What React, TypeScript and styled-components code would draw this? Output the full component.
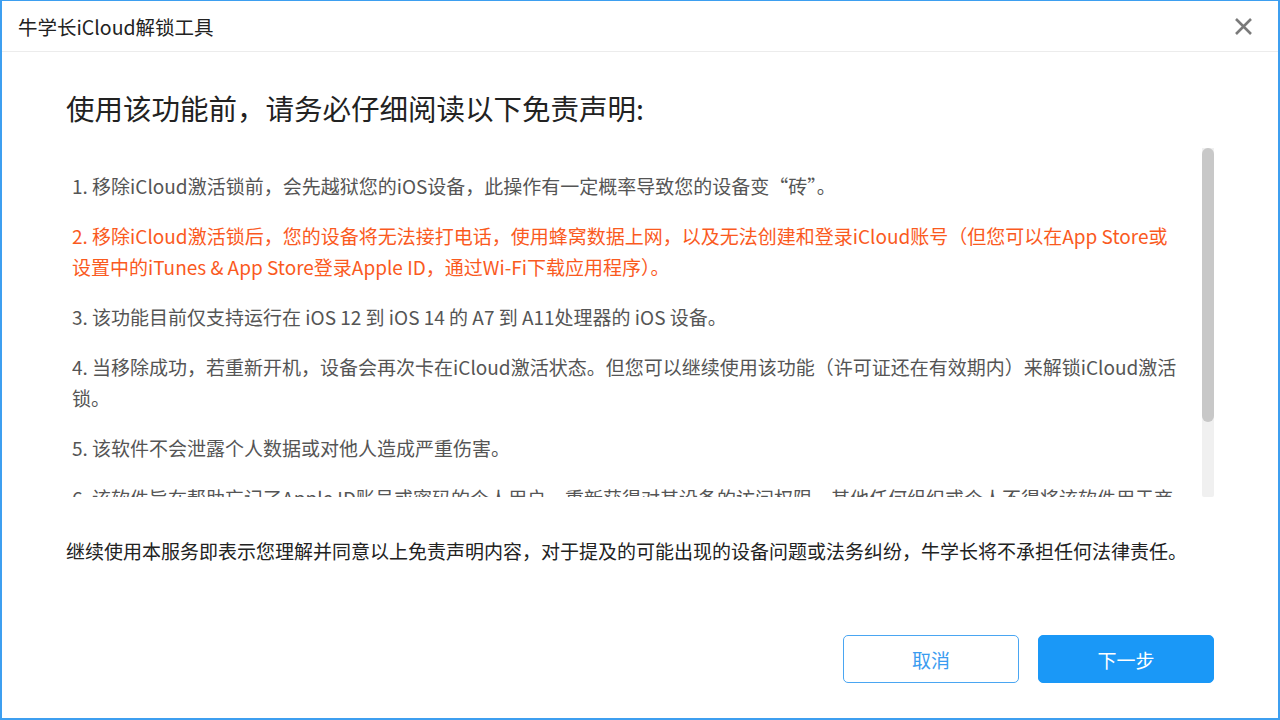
import styled, { createGlobalStyle } from "styled-components";

const GlobalStyle = createGlobalStyle`
  html, body {
    margin: 0;
    padding: 0;
    overflow: hidden;
    background: #ffffff;
  }
  * {
    box-sizing: border-box;
  }
`;

const fontStack = `"Noto Sans CJK SC", "Noto Sans", "Liberation Sans", sans-serif`;

const StyledWindow = styled.div`
  width: 1280px;
  height: 720px;
  display: flex;
  flex-direction: column;
  border: 2px solid #3d9ff0;
  border-top-width: 1px;
  background: #ffffff;
  font-family: ${fontStack};
  color: #222222;
`;

const TitleBar = styled.header`
  height: 51px;
  flex-shrink: 0;
  display: flex;
  align-items: center;
  justify-content: space-between;
  padding: 0 24px 0 16px;
  border-bottom: 1px solid #ececec;

  .title {
    font-size: 19.5px;
    color: #222222;
  }
`;

const CloseButton = styled.button`
  width: 22px;
  height: 22px;
  padding: 0;
  border: none;
  background: transparent;
  display: flex;
  align-items: center;
  justify-content: center;
  cursor: pointer;
  color: #7a7a7a;
`;

const Body = styled.main`
  flex: 1;
  display: flex;
  flex-direction: column;
  padding: 0 64px 35px 64px;
`;

const Heading = styled.h1`
  margin: 36px 0 0;
  font-size: 28.5px;
  font-weight: 400;
  line-height: 40px;
  color: #222222;
`;

const ScrollFrame = styled.div`
  margin: 20px 0 0 6px;
  height: 349px;
  display: flex;
`;

const ScrollContent = styled.div`
  flex: 1;
  overflow: hidden;
  padding: 22px 22px 0 0;
`;

const ScrollTrack = styled.div`
  width: 12px;
  flex-shrink: 0;
  background: #f0f0f0;
  border-radius: 0 0 2px 2px;
`;

const ScrollThumb = styled.div<{ $size: number }>`
  height: ${(p) => p.$size}px;
  background: #c8c8c8;
  border-radius: 6px;
`;

const Item = styled.p<{ $warn?: boolean }>`
  margin: 0 0 19px;
  font-size: 19px;
  line-height: 31px;
  color: ${(p) => (p.$warn ? "#fa5a1e" : "#555555")};

  &:last-child {
    margin-bottom: 0;
  }
`;

const Notice = styled.p`
  margin: 40px 0 0;
  font-size: 19px;
  line-height: 28px;
  color: #222222;
`;

const Actions = styled.div`
  margin-top: auto;
  display: flex;
  justify-content: flex-end;
  gap: 19px;
`;

const ActionButton = styled.button<{ $primary?: boolean }>`
  width: 176px;
  height: 48px;
  border-radius: 5px;
  font-family: ${fontStack};
  font-size: 19px;
  cursor: pointer;
  border: 1px solid ${(p) => (p.$primary ? "#1a98f7" : "#4aa6f2")};
  background: ${(p) => (p.$primary ? "#1a98f7" : "#ffffff")};
  color: ${(p) => (p.$primary ? "#ffffff" : "#3a9cf0")};
`;

const items = [
  { text: "1. 移除iCloud激活锁前，会先越狱您的iOS设备，此操作有一定概率导致您的设备变“砖”。" },
  {
    text: "2. 移除iCloud激活锁后，您的设备将无法接打电话，使用蜂窝数据上网，以及无法创建和登录iCloud账号（但您可以在App Store或设置中的iTunes & App Store登录Apple ID，通过Wi-Fi下载应用程序）。",
    warn: true,
  },
  { text: "3. 该功能目前仅支持运行在 iOS 12 到 iOS 14 的 A7 到 A11处理器的 iOS 设备。" },
  { text: "4. 当移除成功，若重新开机，设备会再次卡在iCloud激活状态。但您可以继续使用该功能（许可证还在有效期内）来解锁iCloud激活锁。" },
  { text: "5. 该软件不会泄露个人数据或对他人造成严重伤害。" },
  { text: "6. 该软件旨在帮助忘记了Apple ID账号或密码的个人用户，重新获得对其设备的访问权限，其他任何组织或个人不得将该软件用于商业或非法用途。" },
];

const App = () => {
  return (
    <>
      <GlobalStyle />
      <StyledWindow>
        <TitleBar>
          <span className="title">牛学长iCloud解锁工具</span>
          <CloseButton aria-label="关闭">
            <svg width="19" height="19" viewBox="0 0 19 19">
              <path d="M2 2 L17 17 M17 2 L2 17" stroke="currentColor" strokeWidth="2.6" />
            </svg>
          </CloseButton>
        </TitleBar>
        <Body>
          <Heading>使用该功能前，请务必仔细阅读以下免责声明:</Heading>
          <ScrollFrame>
            <ScrollContent>
              {items.map((item) => (
                <Item key={item.text} $warn={item.warn}>
                  {item.text}
                </Item>
              ))}
            </ScrollContent>
            <ScrollTrack>
              <ScrollThumb $size={274} />
            </ScrollTrack>
          </ScrollFrame>
          <Notice>
            继续使用本服务即表示您理解并同意以上免责声明内容，对于提及的可能出现的设备问题或法务纠纷，牛学长将不承担任何法律责任。
          </Notice>
          <Actions>
            <ActionButton>取消</ActionButton>
            <ActionButton $primary>下一步</ActionButton>
          </Actions>
        </Body>
      </StyledWindow>
    </>
  );
};

export default App;
